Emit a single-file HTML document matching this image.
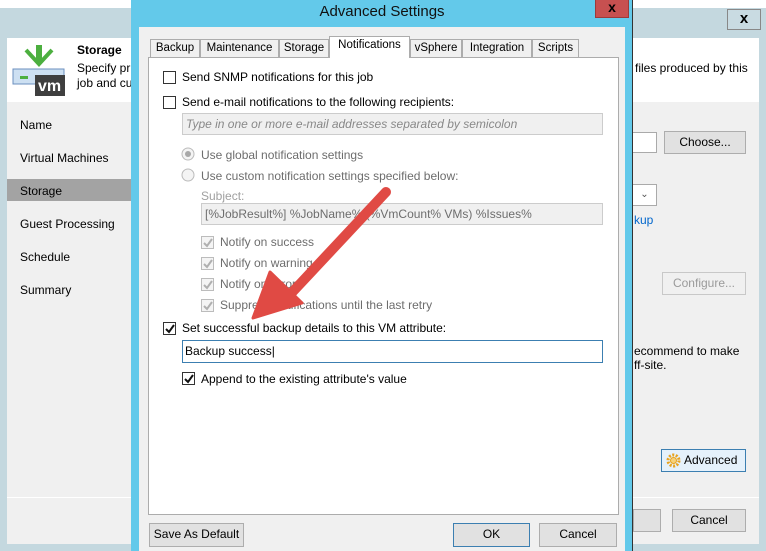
<!DOCTYPE html>
<html><head><meta charset="utf-8"><style>
*{box-sizing:border-box;margin:0;padding:0}
body{width:766px;height:551px;overflow:hidden;position:relative;background:#c4d8df;font-family:"Liberation Sans",sans-serif;font-size:12px;color:#000}
.a{position:absolute}
.btn{position:absolute;background:#e1e1e1;border:1px solid #adadad;text-align:center;line-height:21px;font-size:12px}
.cb{position:absolute;width:13px;height:13px;border:1px solid #333;background:#fff}
.cbd{border-color:#bcbcbc;background:#f4f4f4}
.t{position:absolute;white-space:nowrap}
.g{color:#6d6d6d}
.tab{position:absolute;top:39px;height:18px;border:1px solid #acacac;border-bottom:none;background:#f0f0f0;line-height:16px;text-align:center;font-size:11.5px}
</style></head><body>
<div class="a" style="left:0;top:0;width:766px;height:8px;background:#fff"></div>
<div class="a" style="left:7px;top:38px;width:752px;height:506px;background:#f0f0f0"></div>
<div class="a" style="left:7px;top:38px;width:752px;height:64px;background:#fff"></div>
<div class="btn" style="left:727px;top:9px;width:34px;height:21px;line-height:18px;font-weight:bold;font-size:15px;background:#c9dbe2;border-color:#888">x</div>
<svg class="a" style="left:12px;top:45px" width="56" height="52"><rect x="1" y="24" width="51" height="15" fill="#cde0f2" stroke="#6b8fbf"/><rect x="8" y="31" width="8" height="3" fill="#4caf3f"/><rect x="24" y="0" width="6" height="18" fill="#4caf3f"/><path d="M14 5l13 14 13-14" fill="none" stroke="#4caf3f" stroke-width="4"/><rect x="23" y="30" width="30" height="21" fill="#3f3f3f"/><text x="26" y="46" fill="#fff" font-size="16" font-weight="bold" font-family="Liberation Sans">vm</text></svg>
<div class="t" style="left:77px;top:43px;font-weight:bold">Storage</div>
<div class="t" style="left:77px;top:61px">Specify pr</div>
<div class="t" style="left:77px;top:76px">job and cu</div>
<div class="t" style="left:635px;top:61px">files produced by this</div>
<div class="t" style="left:20px;top:118px">Name</div>
<div class="t" style="left:20px;top:151px">Virtual Machines</div>
<div class="a" style="left:7px;top:179px;width:124px;height:22px;background:#a3a3a3"></div>
<div class="t" style="left:20px;top:184px">Storage</div>
<div class="t" style="left:20px;top:217px">Guest Processing</div>
<div class="t" style="left:20px;top:250px">Schedule</div>
<div class="t" style="left:20px;top:283px">Summary</div>
<div class="a" style="left:7px;top:497px;width:752px;height:1px;background:#fff"></div>
<div class="a" style="left:633px;top:132px;width:24px;height:21px;background:#fff;border:1px solid #aaa;border-left:none"></div>
<div class="btn" style="left:664px;top:131px;width:82px;height:23px">Choose...</div>
<div class="a" style="left:633px;top:184px;width:24px;height:22px;background:#fff;border:1px solid #aaa;border-left:none;font-size:10px;text-align:center;line-height:20px;color:#555">&#8964;</div>
<div class="t" style="left:634px;top:213px;color:#0066cc">kup</div>
<div class="btn" style="left:662px;top:272px;width:84px;height:23px;color:#9a9a9a;border-color:#c8c8c8;background:#f0f0f0">Configure...</div>
<div class="t" style="left:634px;top:344px">ecommend to make</div>
<div class="t" style="left:634px;top:358px">ff-site.</div>
<div class="btn" style="left:661px;top:449px;width:85px;height:23px;border-color:#3c7fb1;background:#e5f1fb;text-align:left;padding-left:22px">Advanced</div>
<svg class="a" style="left:665px;top:452px" width="17" height="17"><circle cx="8.5" cy="8.5" r="5.5" fill="none" stroke="#e8a31f" stroke-width="3" stroke-dasharray="2 1.5"/><circle cx="8.5" cy="8.5" r="3" fill="#f6d27b" stroke="#e8a31f"/></svg>
<div class="btn" style="left:633px;top:509px;width:28px;height:23px"></div>
<div class="btn" style="left:672px;top:509px;width:74px;height:23px">Cancel</div>

<div class="a" style="left:131px;top:0;width:502px;height:551px;background:#63c9ea;border-right:1px solid #333"></div>
<div class="t" style="left:131px;top:3px;width:502px;text-align:center;font-size:15px;color:#111">Advanced Settings</div>
<div class="a" style="left:595px;top:0;width:34px;height:18px;background:#c75050;color:#000;text-align:center;font-weight:bold;font-size:14px;line-height:14px;border:1px solid #9c3a3a;border-top:none">x</div>
<div class="a" style="left:139px;top:27px;width:486px;height:524px;background:#f0f0f0"></div>
<div class="a" style="left:148px;top:57px;width:471px;height:458px;background:#ffffff;border:1px solid #acacac"></div>
<div class="tab" style="left:150px;width:50px">Backup</div>
<div class="tab" style="left:200px;width:79px">Maintenance</div>
<div class="tab" style="left:279px;width:50px">Storage</div>
<div class="tab" style="left:329px;top:36px;height:22px;width:81px;background:#fff;z-index:2">Notifications</div>
<div class="tab" style="left:410px;width:52px">vSphere</div>
<div class="tab" style="left:462px;width:70px">Integration</div>
<div class="tab" style="left:532px;width:47px">Scripts</div>

<div class="cb" style="left:163px;top:71px"></div><div class="t" style="left:182px;top:70px">Send SNMP notifications for this job</div>
<div class="cb" style="left:163px;top:96px"></div><div class="t" style="left:182px;top:95px">Send e-mail notifications to the following recipients:</div>
<div class="a" style="left:182px;top:113px;width:421px;height:22px;background:#f0f0f0;border:1px solid #ccc"></div>
<div class="t g" style="left:186px;top:117px;font-style:italic;color:#888">Type in one or more e-mail addresses separated by semicolon</div>
<svg class="a" style="left:181px;top:147px" width="14" height="40"><circle cx="7" cy="7" r="6" fill="#f4f4f4" stroke="#bbb"/><circle cx="7" cy="7" r="3" fill="#a8a8a8"/><circle cx="7" cy="28" r="6" fill="#f4f4f4" stroke="#bbb"/></svg>
<div class="t g" style="left:201px;top:148px">Use global notification settings</div>
<div class="t g" style="left:201px;top:169px">Use custom notification settings specified below:</div>
<div class="t" style="left:201px;top:189px;color:#a0a0a0">Subject:</div>
<div class="a" style="left:201px;top:203px;width:402px;height:22px;background:#f0f0f0;border:1px solid #ccc"></div>
<div class="t g" style="left:205px;top:207px">[%JobResult%] %JobName% (%VmCount% VMs) %Issues%</div>
<div class="cb cbd" style="left:201px;top:236px"></div><div class="t g" style="left:220px;top:235px">Notify on success</div>
<div class="cb cbd" style="left:201px;top:257px"></div><div class="t g" style="left:220px;top:256px">Notify on warning</div>
<div class="cb cbd" style="left:201px;top:278px"></div><div class="t g" style="left:220px;top:277px">Notify on error</div>
<div class="cb cbd" style="left:201px;top:299px"></div><div class="t g" style="left:220px;top:298px">Suppress notifications until the last retry</div>
<svg class="a" style="left:201px;top:236px" width="13" height="80" fill="none" stroke="#b0b0b0" stroke-width="2"><path d="M3 7l3 3 5-7M3 28l3 3 5-7M3 49l3 3 5-7M3 70l3 3 5-7"/></svg>
<div class="cb" style="left:163px;top:322px"></div><div class="t" style="left:182px;top:321px">Set successful backup details to this VM attribute:</div>
<div class="a" style="left:182px;top:340px;width:421px;height:23px;background:#fff;border:1px solid #3c7fb1"></div>
<div class="t" style="left:185px;top:344px">Backup success|</div>
<div class="cb" style="left:182px;top:372px"></div><div class="t" style="left:201px;top:372px">Append to the existing attribute's value</div>
<svg class="a" style="left:163px;top:322px" width="40" height="64" fill="none" stroke="#111" stroke-width="2"><path d="M3 7l3 3 5-7M22 57l3 3 5-7"/></svg>
<div class="btn" style="left:149px;top:523px;width:95px;height:24px">Save As Default</div>
<div class="btn" style="left:453px;top:523px;width:77px;height:24px;border-color:#3c7fb1">OK</div>
<div class="btn" style="left:539px;top:523px;width:78px;height:24px">Cancel</div>
<svg class="a" style="left:0;top:0" width="766" height="551"><path d="M386 192L285 300" stroke="#e04a44" stroke-width="10" stroke-linecap="round"/><path d="M253 318L270 272L302 303Z" fill="#e04a44" stroke="#e04a44" stroke-width="3" stroke-linejoin="round"/></svg>
</body></html>
